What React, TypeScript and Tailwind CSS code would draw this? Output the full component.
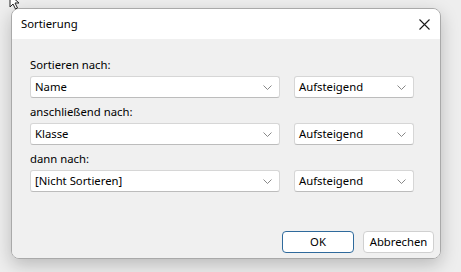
import React from 'react';

const font = { fontFamily: '"Segoe UI", "Noto Sans", sans-serif' };

function Chevron() {
  return (
    <svg width="9" height="5" viewBox="0 0 9 5" fill="none" stroke="#7a7a7a" strokeWidth="0.9">
      <path d="M0.5 0.5l4 4 4-4" />
    </svg>
  );
}

function Combo({ value, wide }: { value: string; wide?: boolean }) {
  return (
    <div
      className={`flex h-[22px] items-center justify-between rounded-[3px] border border-[#d6d6d6] border-b-[#bcbcbc] bg-white pl-[4px] pr-[7px] ${
        wide ? 'w-[250px]' : 'w-[120px]'
      }`}
    >
      <span className="text-[11.3px] leading-[16px] text-black">{value}</span>
      <Chevron />
    </div>
  );
}

const rows = [
  { label: 'Sortieren nach:', value: 'Name' },
  { label: 'anschließend nach:', value: 'Klasse' },
  { label: 'dann nach:', value: '[Nicht Sortieren]' },
];

export default function App() {
  return (
    <div className="relative h-[272px] w-[461px] overflow-hidden bg-[#eeeeee] pl-[11px] pt-[8px]" style={font}>
      {/* background cursor */}
      <svg className="absolute left-[9px] top-[-6px]" width="14" height="16" viewBox="0 0 14 16">
        <path d="M1 1v12l3-3 2.5 5 2-1-2.5-5h4z" fill="white" stroke="#222" strokeWidth="1" />
      </svg>

      <div className="flex h-[251px] w-[430px] flex-col overflow-hidden rounded-[8px] border border-[#a9a9a9] shadow-[0_6px_18px_rgba(0,0,0,0.22)]">
        {/* Title bar */}
        <div className="flex h-[30px] shrink-0 items-center justify-between bg-white pl-[9px] pr-[10px]">
          <span className="text-[11.3px] text-black">Sortierung</span>
          <svg width="11" height="11" viewBox="0 0 11 11" stroke="#1a1a1a" strokeWidth="1.1">
            <path d="M0.5 0.5l10 10M10.5 0.5l-10 10" />
          </svg>
        </div>

        {/* Body */}
        <div className="flex flex-1 flex-col bg-[#f0f0f0] pl-[18px] pr-[6px] pt-[18px]">
          {rows.map((r, i) => (
            <div key={r.label} className={i === 0 ? '' : 'pt-[6px]'}>
              <div className="mb-[3px] h-[16px] text-[11.3px] leading-[16px] text-black">{r.label}</div>
              <div className="flex gap-[14px]">
                <Combo value={r.value} wide />
                <Combo value="Aufsteigend" />
              </div>
            </div>
          ))}

          <div className="mt-auto mb-[5px] flex justify-end gap-[9px]">
            <button className="h-[22px] w-[72px] rounded-[4px] border border-[#2f6a9c] bg-white text-[11.3px] text-black">
              OK
            </button>
            <button className="h-[22px] w-[71px] rounded-[4px] border border-[#d0d0d0] bg-white text-[11.3px] text-black">
              Abbrechen
            </button>
          </div>
        </div>
      </div>
    </div>
  );
}
